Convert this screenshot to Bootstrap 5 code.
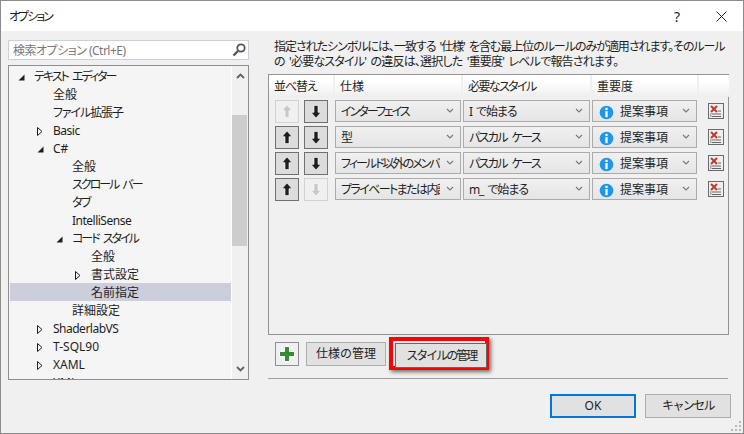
<!DOCTYPE html>
<html lang="ja">
<head>
<meta charset="utf-8">
<title>オプション</title>
<link rel="stylesheet" href="https://cdn.jsdelivr.net/npm/bootstrap@5.3.0/dist/css/bootstrap.min.css">
<style>
html,body{margin:0;background:#f0f0f0;overflow:hidden}
body{font:12px/15px "Noto Sans","Noto Sans CJK JP",sans-serif;font-feature-settings:"palt";color:#1e1e1e}
.ls-05{letter-spacing:-.5px}.ls-1{letter-spacing:-1.1px;word-spacing:2px}.ls-15{letter-spacing:-1.6px;word-spacing:3px}.ls-2{letter-spacing:-2px;word-spacing:3px}
.win{width:744px;height:434px;border:1px solid #8c8c8c;background:#f0f0f0;position:relative;overflow:hidden}
.titlebar{height:30px;background:#fff;padding-left:8px;padding-right:16px;flex:none}
.tb-q{width:12px;margin-right:33px;font-size:14px;text-align:center}
.leftcol{width:248px;padding:9px 0 0 7px;flex:none}
.search{height:20px;border:1px solid #ccced8;background:#fff;padding:0 2px 0 4px;color:#777}
.tree{height:315px;margin-top:5px;border:1px solid #8e8e8e;background:#f5f5f5;overflow:hidden}
.tree-list{width:222px;padding-top:1px;flex:none;margin-left:1px;border-right:1px solid #fff;overflow:hidden}
.ti{height:18px;line-height:19px;white-space:nowrap}
.ti.sel-item{background:#cccedb}
.tw{display:inline-block;width:11px;margin-right:8px;vertical-align:-1px}
.l0{padding-left:5px}.l1{padding-left:24px}.l2{padding-left:43px}.l3{padding-left:62px}
.sb{width:17px;flex:none;background:#f0f0f0;padding-top:7px}
.sb-thumb{height:131px;width:15px;background:#cdcdcd;margin-top:36px}
.sb-down{margin-top:120px}
.rightcol{width:463px;margin-left:19px;flex:none;padding-top:8px}
.hint{padding-left:6px;height:29px;margin:0;white-space:nowrap}
.hint .a{letter-spacing:-1.03px;word-spacing:2px}.hint .b{letter-spacing:-.8px;word-spacing:2px}
.panel{width:461px;height:261px;margin-top:6px;border:1px solid #939393;background:#f0f0f0}
.hd{height:22px;gap:2px;margin-bottom:1px}
.hd div{height:22px;line-height:24px;padding-left:5px;background:linear-gradient(#fff,#fff 30%,#eee);flex:none}
.c0{width:64px}.c1{width:126px}.c2{width:127px}.c3{width:105px}.c4{width:30px}
.row-r{height:26px;padding-left:6px;flex-wrap:nowrap}
.mv{width:24px;height:23px;padding:0;border:1px solid #707070;background:#dcdcdc;border-radius:0;margin-right:5px;flex:none;color:#1e1e1e;line-height:0}
.mv:disabled{opacity:1;border-color:#d2d2d2;background:#f0f0f0;color:#c8c8c8}
.sel{height:22px;line-height:22px;border:1px solid #ababab;border-radius:0;padding:0 20px 0 5px;margin-right:2px;color:#1e1e1e;font-size:12px;background-color:#e9e9e9;background-image:url("data:image/svg+xml,%3Csvg xmlns='http://www.w3.org/2000/svg' width='8' height='5'%3E%3Cpath d='M1 1l3 3 3-3' fill='none' stroke='%23777' stroke-width='1.1'/%3E%3C/svg%3E"),linear-gradient(#f0f0f0,#e5e5e5);background-repeat:no-repeat;background-position:right 6px top 7px,0 0;background-size:8px 5px,100% 100%;white-space:nowrap;flex:none;box-shadow:none}
.sel span{display:block;overflow:hidden}
.sel.w1{width:126px;margin-left:2px}.sel.w2{width:127px}.sel.w3{width:105px;padding-left:6px}
.sel .ic{margin-right:6px;vertical-align:-4px}
.del{width:16px;height:16px;margin-left:9px;flex:none}
.toolbar{padding:7px 0 0 7px;height:36px}
.tbtn{height:24px;border:1px solid #8f8f8f;border-radius:0;background:#e1e1e1;padding:0;font-size:12px;line-height:20px;color:#1e1e1e;flex:none}
.tbtn.add{width:24px;margin-right:7px;background:#f0f0f0}
.tbtn.mg{width:80px;border-color:#adadad}
.mark{margin:-5px 0 0 3px;width:100px;height:33px;border:4px solid #f00;box-shadow:2px 2px 4px rgba(0,0,0,.55);flex:none;background:#f0f0f0}
.mark .tbtn{width:92px;height:25px;border-color:#666;display:block;background:#e1e1e1}
.rule{border:0;border-top:1px solid #a0a0a0;opacity:1;height:0;margin:7px 0 0;width:460px}
.footer{padding-top:15px;gap:9px;margin-left:282px;width:181px}
.fbtn{width:86px;height:24px;border-radius:0;background:#e1e1e1;border:1px solid #adadad;padding:0;font-size:12px;color:#1e1e1e;line-height:20px;flex:none}
.fbtn.ok{border:2px solid #0078d7}
.grip{position:absolute;right:1px;bottom:1px;width:12px;height:12px}
</style>
</head>
<body>
<svg width="0" height="0" style="position:absolute">
<symbol id="up" viewBox="0 0 22 21"><path d="M11 4l4.800 5.500-2.800.2v6.800H9V9.700l-2.800-.2z" fill="currentColor" stroke="#fff" stroke-width=".6"/></symbol>
<symbol id="dn" viewBox="0 0 22 21"><path d="M11 17l4.800-5.500-2.800-.2V4.500H9v6.800l-2.800.2z" fill="currentColor" stroke="#fff" stroke-width=".6"/></symbol>
<symbol id="info" viewBox="0 0 16 16"><circle cx="8" cy="8" r="7.300" fill="#1c97ea"/><rect x="6.800" y="3" width="2.400" height="2.400" fill="#fff"/><rect x="6.800" y="6.500" width="2.400" height="6.500" fill="#fff"/></symbol>
<symbol id="del" viewBox="0 0 16 16"><rect x=".5" y=".5" width="15" height="15" fill="#efefef" stroke="#6a6a6a"/><path d="M3 3l6 6M9 3l-6 6" stroke="#c0392b" stroke-width="2" fill="none"/><path d="M10 8h3M4 11h9M4 13.500h9" stroke="#666" fill="none"/><rect x="2" y="10" width="1.500" height="4" fill="#aaa"/></symbol>
<symbol id="open" viewBox="0 0 11 9"><path d="M9.500 1.500v6h-6z" fill="#1e1e1e"/></symbol>
<symbol id="closed" viewBox="0 0 11 9"><path d="M3.500 .5l4.500 4-4.500 4z" fill="#f5f5f5" stroke="#1e1e1e"/></symbol>
</svg>
<div class="win d-flex flex-column">
  <div class="titlebar d-flex align-items-center justify-content-between">
    <span class="ls-2">オプション</span>
    <div class="d-flex align-items-center">
      <span class="tb-q">?</span>
      <svg width="11" height="11" viewBox="0 0 11 11"><path d="M.5.5l10 10M10.500.5l-10 10" stroke="#222" fill="none"/></svg>
    </div>
  </div>
  <div class="d-flex flex-grow-1">
    <div class="leftcol">
      <div class="search d-flex align-items-center justify-content-between">
        <span class="ls-05">検索オプション (Ctrl+E)</span>
        <svg width="14" height="14" viewBox="0 0 14 14"><circle cx="9" cy="5" r="3.700" fill="#fff" stroke="#555" stroke-width="1.800"/><path d="M6 8l-4.500 4.500" stroke="#555" stroke-width="2.400" fill="none"/></svg>
      </div>
      <div class="tree d-flex">
        <div class="tree-list">
          <div class="ti l0"><svg class="tw" height="9"><use href="#open"/></svg><span class="ls-2">テキスト エディター</span></div>
          <div class="ti l1"><span class="tw"></span>全般</div>
          <div class="ti l1"><span class="tw"></span><span class="ls-1">ファイル拡張子</span></div>
          <div class="ti l1"><svg class="tw" height="9"><use href="#closed"/></svg><span class="ls-05">Basic</span></div>
          <div class="ti l1"><svg class="tw" height="9"><use href="#open"/></svg>C#</div>
          <div class="ti l2"><span class="tw"></span>全般</div>
          <div class="ti l2"><span class="tw"></span><span class="ls-2">スクロール バー</span></div>
          <div class="ti l2"><span class="tw"></span><span class="ls-15">タブ</span></div>
          <div class="ti l2"><span class="tw"></span><span class="ls-05">IntelliSense</span></div>
          <div class="ti l2"><svg class="tw" height="9"><use href="#open"/></svg><span class="ls-2">コード スタイル</span></div>
          <div class="ti l3"><span class="tw"></span>全般</div>
          <div class="ti l3"><svg class="tw" height="9"><use href="#closed"/></svg>書式設定</div>
          <div class="ti l3 sel-item"><span class="tw"></span>名前指定</div>
          <div class="ti l2"><span class="tw"></span>詳細設定</div>
          <div class="ti l1"><svg class="tw" height="9"><use href="#closed"/></svg><span class="ls-05">ShaderlabVS</span></div>
          <div class="ti l1"><svg class="tw" height="9"><use href="#closed"/></svg>T-SQL90</div>
          <div class="ti l1"><svg class="tw" height="9"><use href="#closed"/></svg>XAML</div>
          <div class="ti l1"><svg class="tw" height="9"><use href="#closed"/></svg>XML</div>
        </div>
        <div class="sb">
          <svg class="d-block mx-auto" width="9" height="6" viewBox="0 0 9 6"><path d="M1 5l3.500-3.500L8 5" fill="none" stroke="#606060" stroke-width="1.800"/></svg>
          <div class="sb-thumb"></div>
          <svg class="d-block mx-auto sb-down" width="9" height="6" viewBox="0 0 9 6"><path d="M1 1l3.500 3.500L8 1" fill="none" stroke="#606060" stroke-width="1.800"/></svg>
        </div>
      </div>
    </div>
    <div class="rightcol">
      <p class="hint"><span class="a">指定されたシンボルには、一致する '仕様' を含む最上位のルールのみが適用されます。そのルール</span><br><span class="b">の '必要なスタイル' の違反は、選択した '重要度' レベルで報告されます。</span></p>
      <div class="panel">
        <div class="hd d-flex">
          <div class="c0"><span class="ls-1">並べ替え</span></div><div class="c1">仕様</div><div class="c2"><span class="ls-15">必要なスタイル</span></div><div class="c3">重要度</div><div class="c4"></div>
        </div>
        <div class="row-r d-flex align-items-center">
          <button class="btn mv" disabled><svg width="22" height="21"><use href="#up"/></svg></button>
          <button class="btn mv"><svg width="22" height="21"><use href="#dn"/></svg></button>
          <div class="form-select sel w1"><span class="ls-2">インターフェイス</span></div>
          <div class="form-select sel w2"><span class="ls-1">I で始まる</span></div>
          <div class="form-select sel w3"><svg class="ic" width="15" height="15"><use href="#info"/></svg>提案事項</div>
          <svg class="del"><use href="#del"/></svg>
        </div>
        <div class="row-r d-flex align-items-center">
          <button class="btn mv"><svg width="22" height="21"><use href="#up"/></svg></button>
          <button class="btn mv"><svg width="22" height="21"><use href="#dn"/></svg></button>
          <div class="form-select sel w1">型</div>
          <div class="form-select sel w2"><span class="ls-15">パスカル ケース</span></div>
          <div class="form-select sel w3"><svg class="ic" width="15" height="15"><use href="#info"/></svg>提案事項</div>
          <svg class="del"><use href="#del"/></svg>
        </div>
        <div class="row-r d-flex align-items-center">
          <button class="btn mv"><svg width="22" height="21"><use href="#up"/></svg></button>
          <button class="btn mv"><svg width="22" height="21"><use href="#dn"/></svg></button>
          <div class="form-select sel w1"><span class="ls-2">フィールド以外のメンバー</span></div>
          <div class="form-select sel w2"><span class="ls-15">パスカル ケース</span></div>
          <div class="form-select sel w3"><svg class="ic" width="15" height="15"><use href="#info"/></svg>提案事項</div>
          <svg class="del"><use href="#del"/></svg>
        </div>
        <div class="row-r d-flex align-items-center">
          <button class="btn mv"><svg width="22" height="21"><use href="#up"/></svg></button>
          <button class="btn mv" disabled><svg width="22" height="21"><use href="#dn"/></svg></button>
          <div class="form-select sel w1"><span class="ls-15">プライベートまたは内部フィールド</span></div>
          <div class="form-select sel w2"><span class="ls-1">m_ で始まる</span></div>
          <div class="form-select sel w3"><svg class="ic" width="15" height="15"><use href="#info"/></svg>提案事項</div>
          <svg class="del"><use href="#del"/></svg>
        </div>
      </div>
      <div class="toolbar d-flex">
        <button class="btn tbtn add d-flex align-items-center justify-content-center"><svg width="18" height="18" viewBox="0 0 18 18"><path d="M6.500 1.500h5v5h5v5h-5v5h-5v-5h-5v-5h5z" fill="#388a34" stroke="#fff"/></svg></button>
        <button class="btn tbtn mg">仕様の管理</button>
        <div class="mark"><button class="btn tbtn"><span class="ls-2">スタイルの管理</span></button></div>
      </div>
      <hr class="rule">
      <div class="footer d-flex">
        <button class="btn fbtn ok">OK</button>
        <button class="btn fbtn"><span class="ls-15">キャンセル</span></button>
      </div>
    </div>
  </div>
  <svg class="grip" viewBox="0 0 12 12"><g fill="#b8b8b8"><rect x="9" y="1" width="2" height="2"/><rect x="5" y="5" width="2" height="2"/><rect x="9" y="5" width="2" height="2"/><rect x="1" y="9" width="2" height="2"/><rect x="5" y="9" width="2" height="2"/><rect x="9" y="9" width="2" height="2"/></g></svg>
</div>
</body>
</html>
